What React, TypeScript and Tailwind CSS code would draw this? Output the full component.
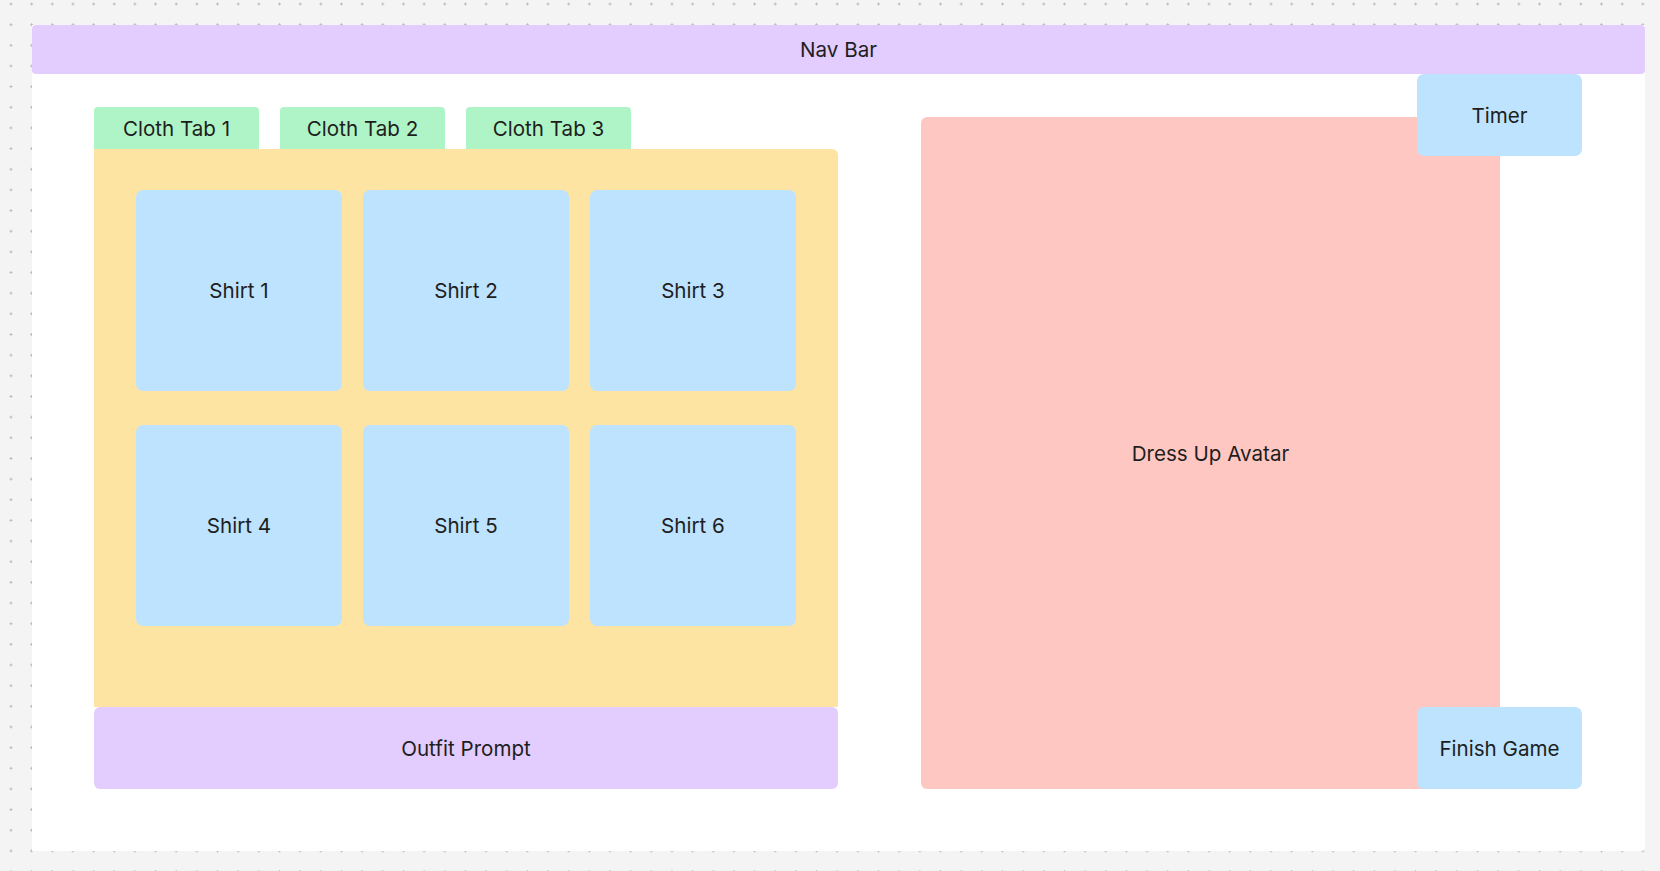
const shirts = ["Shirt 1", "Shirt 2", "Shirt 3", "Shirt 4", "Shirt 5", "Shirt 6"];
const tabs = ["Cloth Tab 1", "Cloth Tab 2", "Cloth Tab 3"];

export default function App() {
  return (
    <div
      className="h-[871px] w-[1660px] overflow-hidden bg-[#f4f4f4] bg-[radial-gradient(circle,#bcbcbc_1.1px,transparent_1.4px)] bg-[length:20.67px_20.67px] bg-[position:0.67px_-6.33px] pt-[25px] pl-[32px] text-[20.6px] text-[#1e1e1e]"
      style={{ fontFamily: "Inter, 'Noto Sans', sans-serif" }}
    >
      <div className="flex h-[826px] w-[1613px] flex-col rounded-br-[4px] bg-white">
        {/* top nav */}
        <div className="flex h-[49px] items-center justify-center rounded-[4px] bg-[#e3ccfe] pt-[1px]">
          Nav Bar
        </div>

        <div className="flex gap-[83px] pl-[62px] pr-[63px] pt-[33px]">
          {/* wardrobe side */}
          <div className="flex w-[744px] flex-col">
            <div className="flex h-[42px] gap-[21px]">
              {tabs.map((t) => (
                <div
                  key={t}
                  className="flex w-[165px] items-center justify-center rounded-t-[4px] bg-[#aff4c6] pt-[2px]"
                >
                  {t}
                </div>
              ))}
            </div>
            <div className="h-[558px] rounded-tr-[6px] bg-[#fee4a2] px-[42px] pt-[41px]">
              <div className="grid grid-cols-3 gap-x-[21px] gap-y-[34px]">
                {shirts.map((s) => (
                  <div
                    key={s}
                    className="flex h-[201px] items-center justify-center rounded-[7px] bg-[#bde3ff] pt-[2px]"
                  >
                    {s}
                  </div>
                ))}
              </div>
            </div>
            <div className="flex h-[82px] items-center justify-center rounded-[6px] bg-[#e3ccfe] pt-[2px]">
              Outfit Prompt
            </div>
          </div>

          {/* avatar side */}
          <div className="relative flex h-[682px] flex-1 flex-col pr-[82px] pt-[10px]">
            <div className="flex flex-1 items-center justify-center rounded-l-[6px] bg-[#ffc7c2] pt-[2px]">
              Dress Up Avatar
            </div>
            <div className="absolute right-0 top-[-33px] flex h-[82px] w-[165px] items-center justify-center rounded-[7px] bg-[#bde3ff] pt-[2px]">
              Timer
            </div>
            <div className="absolute bottom-0 right-0 flex h-[82px] w-[165px] items-center justify-center rounded-[7px] bg-[#bde3ff] pt-[2px]">
              Finish Game
            </div>
          </div>
        </div>
      </div>
    </div>
  );
}
